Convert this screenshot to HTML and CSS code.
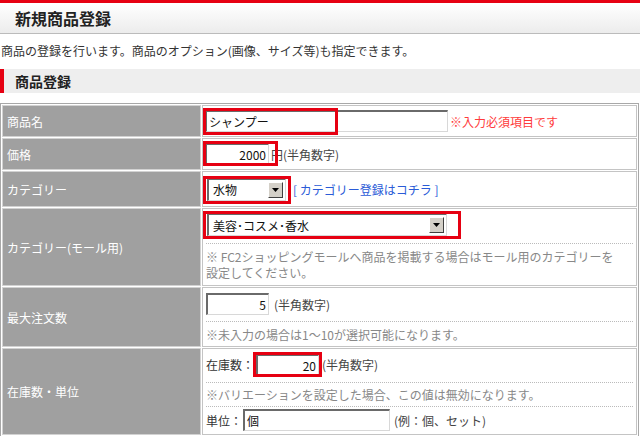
FILE: index.html
```html
<!DOCTYPE html>
<html lang="ja">
<head>
  <meta charset="UTF-8">
  <meta name="viewport" content="width=device-width, initial-scale=1.0">
  <title>新規商品登録</title>
  <link rel="stylesheet" href="styles.css">
</head>
<body>
  <h1 class="page-title">新規商品登録</h1>
  <p class="lead">商品の登録を行います。商品のオプション(画像、サイズ等)も指定できます。</p>
  <h2 class="section-title">商品登録</h2>

  <table class="form-table">
    <tr class="row-name">
      <th>商品名</th>
      <td>
        <span class="field">
          <input class="text name-input" type="text" value="シャンプー">
          <span class="mark mark-name"></span>
        </span><span class="required">※入力必須項目です</span>
      </td>
    </tr>
    <tr class="row-price">
      <th>価格</th>
      <td>
        <span class="field">
          <input class="text num price-input" type="text" value="2000">
          <span class="mark mark-price"></span>
        </span><span class="hint price-hint">円(半角数字)</span>
      </td>
    </tr>
    <tr class="row-cat">
      <th>カテゴリー</th>
      <td>
        <span class="field">
          <span class="select cat-select">
            <select><option>水物</option></select>
            <span class="arrow"><svg width="7" height="4" viewBox="0 0 7 4"><path d="M0 0h7L3.5 4z" fill="#000"/></svg></span>
          </span>
          <span class="mark mark-cat"></span>
        </span><a class="link" href="#">[ カテゴリー登録はコチラ ]</a>
      </td>
    </tr>
    <tr class="row-mall">
      <th>カテゴリー(モール用)</th>
      <td class="stack">
        <div class="line">
          <span class="field">
            <span class="select mall-select">
              <select><option>美容･コスメ･香水</option></select>
              <span class="arrow"><svg width="7" height="4" viewBox="0 0 7 4"><path d="M0 0h7L3.5 4z" fill="#000"/></svg></span>
            </span>
            <span class="mark mark-mall"></span>
          </span>
        </div>
        <div class="note">※ FC2ショッピングモールへ商品を掲載する場合はモール用のカテゴリーを<br>設定してください。</div>
      </td>
    </tr>
    <tr class="row-max">
      <th>最大注文数</th>
      <td class="stack">
        <div class="line">
          <input class="text num max-input" type="text" value="5"><span class="hint max-hint">(半角数字)</span>
        </div>
        <div class="note">※未入力の場合は1～10が選択可能になります。</div>
      </td>
    </tr>
    <tr class="row-stock">
      <th>在庫数・単位</th>
      <td class="stack">
        <div class="line">
          <span class="caption">在庫数：</span><span class="field">
            <input class="text num stock-input" type="text" value="20">
            <span class="mark mark-stock"></span>
          </span><span class="hint stock-hint">(半角数字)</span>
        </div>
        <div class="note note-boxed">※バリエーションを設定した場合、この値は無効になります。</div>
        <div class="line unit-line">
          <span class="caption">単位：</span><input class="text unit-input" type="text" value="個"><span class="hint unit-hint">(例：個、セット)</span>
        </div>
      </td>
    </tr>
  </table>
</body>
</html>
```

FILE: styles.css
```css
* {
  box-sizing: border-box;
}

body {
  margin: 0;
  font-family: "Noto Sans CJK JP", "Liberation Sans", sans-serif;
  font-size: 12px;
  color: #333;
  background-color: #fff;
}

.page-title {
  margin: 0;
  height: 34px;
  padding-left: 15px;
  border-top: 3px solid #e60012;
  border-bottom: 1px solid #bbb;
  background: linear-gradient(#fff, #ececec);
  font-size: 16px;
  line-height: 30px;
  color: #222;
}

.lead {
  margin: 0;
  padding: 9px 0 0 1px;
  line-height: 16px;
  color: #333;
}

.section-title {
  margin: 10px 0 0;
  height: 24px;
  padding-left: 11px;
  border-left: 4px solid #e60012;
  background-color: #eee;
  font-size: 14px;
  line-height: 24px;
  color: #222;
}

/* form table */
.form-table {
  margin-top: 10px;
  width: 639px;
  border: 1px solid #a8a8a8;
  border-collapse: separate;
  border-spacing: 1px;
}

.form-table th {
  width: 199px;
  padding: 0 4px;
  border: 1px solid #d2d2d2;
  background-color: #a0a0a0;
  color: #fff;
  font-weight: normal;
  text-align: left;
  vertical-align: middle;
}

.form-table td {
  padding: 0 3px;
  border: 1px solid #c4c4c4;
  vertical-align: middle;
  white-space: nowrap;
}

.row-name th, .row-name td { height: 32px; }
.row-price th, .row-price td { height: 32px; }
.row-cat th, .row-cat td { height: 36px; }
.row-mall th, .row-mall td { height: 78px; }
.row-max th, .row-max td { height: 59px; }

.form-table td.stack {
  vertical-align: top;
  padding-top: 4px;
  padding-bottom: 3px;
}

.row-max td.stack,
.row-stock td.stack {
  padding-top: 5px;
}

.line {
  display: flex;
  align-items: center;
}

.note {
  margin-top: 7px;
  padding: 5px 0 0;
  border-top: 1px dotted #bbb;
  line-height: 16px;
  color: #888;
  white-space: normal;
}

.row-max .note {
  margin-top: 6px;
}

.note-boxed {
  padding: 4px 0 3px;
  border-bottom: 1px dotted #bbb;
}

.unit-line {
  margin-top: 2px;
}

/* inputs */
.field {
  position: relative;
  display: inline-block;
  vertical-align: middle;
}

.text {
  display: inline-block;
  vertical-align: middle;
  height: 22px;
  margin: 0;
  padding: 0 2px;
  border-style: solid;
  border-width: 2px 1px 1px 2px;
  border-color: #6a6a6a #d8d8d8 #d8d8d8 #6a6a6a;
  font-family: inherit;
  font-size: 12px;
  color: #111;
  background-color: #fff;
}

.num {
  text-align: right;
}

.name-input { width: 243px; margin-left: -1px; }
.price-input { width: 64px; margin-left: -1px; }
.max-input { width: 63px; height: 22px; }
.stock-input { width: 63px; height: 21px; }
.unit-input { width: 147px; }

.select {
  display: inline-flex;
  align-items: center;
  height: 23px;
  border-style: solid;
  border-width: 2px 1px 1px 2px;
  border-color: #6a6a6a #d8d8d8 #d8d8d8 #6a6a6a;
  background-color: #fff;
  vertical-align: middle;
}

.select select {
  flex: 1;
  min-width: 0;
  height: 100%;
  padding: 0 0 0 4px;
  border: none;
  outline: none;
  appearance: none;
  -webkit-appearance: none;
  background: transparent;
  font-family: inherit;
  font-size: 12px;
  color: #111;
}

.arrow {
  display: flex;
  align-items: center;
  justify-content: center;
  width: 15px;
  height: 16px;
  margin-right: 2px;
  border: 1px solid;
  border-color: #fff #404040 #404040 #fff;
  background-color: #d4d0c8;
}

.cat-select { width: 79px; margin-left: 1px; }
.mall-select { width: 240px; margin-left: 1px; }

/* red annotation boxes */
.mark {
  position: absolute;
  border: 3px solid #e60012;
  pointer-events: none;
}

.mark-name { left: -3px; top: -2px; width: 135px; height: 27px; }
.mark-price { left: -3px; top: -2px; width: 75px; height: 25px; }
.mark-cat { left: -3px; top: -2px; width: 88px; height: 28px; }
.mark-mall { left: -3px; top: -2px; width: 258px; height: 28px; }
.mark-stock { left: -3px; top: -2px; width: 69px; height: 25px; }

/* inline texts */
.required {
  margin-left: 2px;
  color: #ff3b3b;
  vertical-align: middle;
}

.hint {
  color: #444;
  vertical-align: middle;
}

.price-hint { margin-left: 2px; }
.max-hint { margin-left: 5px; }
.stock-hint { margin-left: 3px; }
.unit-hint { margin-left: 4px; }

.caption {
  color: #333;
}

.row-stock .caption + .field { margin-left: 2px; }
.unit-line .caption + .text { margin-left: 1px; }

.link {
  margin-left: 7px;
  color: #2a5bd7;
  text-decoration: none;
  vertical-align: middle;
}
```
